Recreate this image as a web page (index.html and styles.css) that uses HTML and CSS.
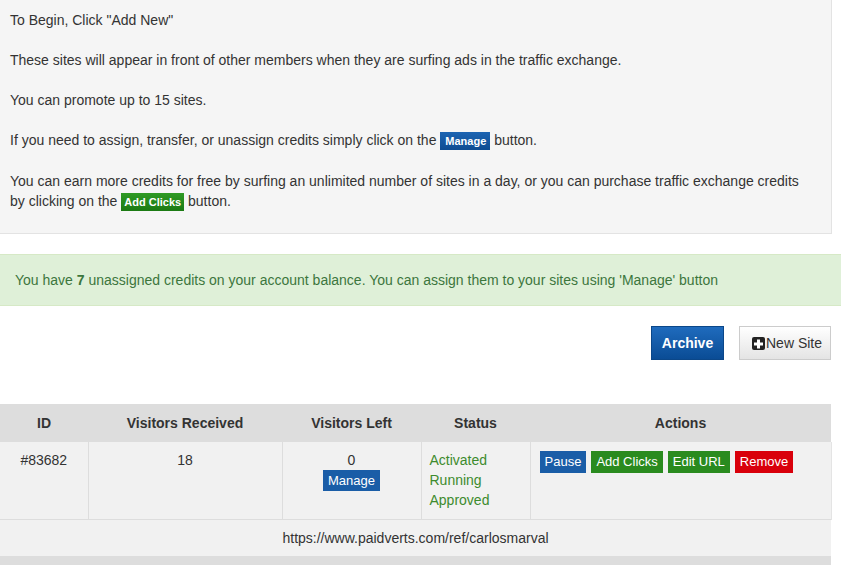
FILE: index.html
```html
<!DOCTYPE html>
<html>
<head>
<meta charset="utf-8">
<link rel="stylesheet" href="styles.css">
</head>
<body>
<div class="page">
  <div class="well">
    <p>To Begin, Click "Add New"</p>
    <p>These sites will appear in front of other members when they are surfing ads in the traffic exchange.</p>
    <p>You can promote up to 15 sites.</p>
    <p>If you need to assign, transfer, or unassign credits simply click on the <span class="tag tag-blue">Manage</span> button.</p>
    <p>You can earn more credits for free by surfing an unlimited number of sites in a day, or you can purchase traffic exchange credits by clicking on the <span class="tag tag-green">Add Clicks</span> button.</p>
  </div>

  <div class="alert">You have <b>7</b> unassigned credits on your account balance. You can assign them to your sites using 'Manage' button</div>

  <div class="toolbar">
    <button class="btn btn-archive">Archive</button>
    <button class="btn btn-new"><svg class="plus" width="13" height="13" viewBox="0 0 13 13"><rect width="13" height="13" rx="2" fill="#222"/><path d="M5 2.5h3v3h3v3H8v3H5v-3H2v-3h3z" fill="#fff"/></svg>New Site</button>
  </div>

  <table class="sites">
    <colgroup>
      <col class="c1"><col class="c2"><col class="c3"><col class="c4"><col class="c5">
    </colgroup>
    <thead>
      <tr><th>ID</th><th>Visitors Received</th><th>Visitors Left</th><th>Status</th><th>Actions</th></tr>
    </thead>
    <tbody>
      <tr class="data">
        <td>#83682</td>
        <td>18</td>
        <td>0<br><span class="sbtn sb-blue manage">Manage</span></td>
        <td class="status">Activated<br>Running<br>Approved</td>
        <td class="actions"><span class="sbtn sb-blue">Pause</span><span class="sbtn sb-green">Add Clicks</span><span class="sbtn sb-green">Edit URL</span><span class="sbtn sb-red">Remove</span></td>
      </tr>
      <tr class="url"><td colspan="5">https://www.paidverts.com/ref/carlosmarval</td></tr>
      <tr class="foot"><td colspan="5"></td></tr>
    </tbody>
  </table>
</div>
</body>
</html>
```

FILE: styles.css
```css
html, body {
  margin: 0;
  padding: 0;
  background: #fff;
}
body {
  font-family: "Liberation Sans", Arial, sans-serif;
  font-size: 14px;
  line-height: 20px;
  color: #333;
  overflow: hidden;
}
.page {
  width: 841px;
}
.well {
  width: 801px;
  margin: -1px 0 0 -1px;
  padding: 10px 20px 21px 10px;
  background: #f5f5f5;
  border: 1px solid #e3e3e3;
}
.well p {
  margin: 0 0 20px;
}
.well p:last-child {
  margin-bottom: 0;
}
.tag {
  color: #fff;
  font-weight: bold;
  font-size: 11px;
  padding: 3px 4px 3px 5px;
}
.tag-blue {
  background: linear-gradient(#1c64b2, #0e4c92);
}
.tag-green {
  padding: 3px 3px 3px 3px;
  background: linear-gradient(#2f9a24, #1b7a13);
}
.alert {
  margin-top: 20px;
  padding: 15px 15px;
  background: #dff0d8;
  border-top: 1px solid #d6e9c6;
  border-bottom: 1px solid #d6e9c6;
  color: #3c763d;
}
.alert b {
  font-weight: bold;
}
.toolbar {
  width: 831px;
  display: flex;
  justify-content: flex-end;
  gap: 15px;
  margin-top: 20px;
}
.btn {
  font-family: "Liberation Sans", Arial, sans-serif;
  font-size: 14px;
  height: 34px;
  padding: 0 12px;
  border-radius: 0;
  cursor: pointer;
  display: flex;
  align-items: center;
}
.btn-archive {
  width: 73px;
  justify-content: center;
  color: #fff;
  font-weight: bold;
  border: 1px solid #0b4789;
  background: linear-gradient(#1f6bbd, #0a4c95);
}
.btn-new {
  width: 92px;
  padding: 0 0 0 12px;
  color: #333;
  border: 1px solid #ccc;
  background: linear-gradient(#ffffff, #e4e4e4);
}
.plus {
  display: block;
  margin-right: 1px;
}
.sites {
  width: 831px;
  margin-top: 44px;
  border-collapse: collapse;
  table-layout: fixed;
}
.c1 { width: 88px; }
.c2 { width: 194px; }
.c3 { width: 139px; }
.c4 { width: 109px; }
.c5 { width: 301px; }
.sites th {
  background: #dddddd;
  font-weight: bold;
  text-align: center;
  padding: 9px 8px 9px;
  line-height: 20px;
}
.sites td {
  background: #f1f1f1;
  padding: 8px 8px 8px;
  vertical-align: top;
  text-align: center;
}
.data td {
  border-left: 1px solid #dddddd;
  height: 60px;
}
.data td:first-child {
  border-left: none;
}
.data td:last-child {
  border-right: 1px solid #e4e4e4;
}
.url td {
  border-top: 1px solid #dddddd;
  padding: 8px 8px 8px;
}
.foot td {
  background: #dddddd;
  height: 20px;
  padding: 0;
}
.status {
  text-align: left !important;
  color: #3d8b2e;
}
.sbtn {
  display: inline-block;
  color: #fff;
  font-size: 13px;
  line-height: 22px;
  padding: 0 5px;
  margin-right: 5px;
  vertical-align: top;
}
.actions {
  text-align: left !important;
  padding-left: 9px !important;
  padding-top: 9px !important;
  white-space: nowrap;
}
.sb-blue { background: #1a5da7; }
.sb-green { background: #2a8b1f; }
.sb-red { background: #d9000b; }
.manage {
  margin: 0;
  font-size: 13px;
  line-height: 21px;
  padding: 0 5px;
}
```
